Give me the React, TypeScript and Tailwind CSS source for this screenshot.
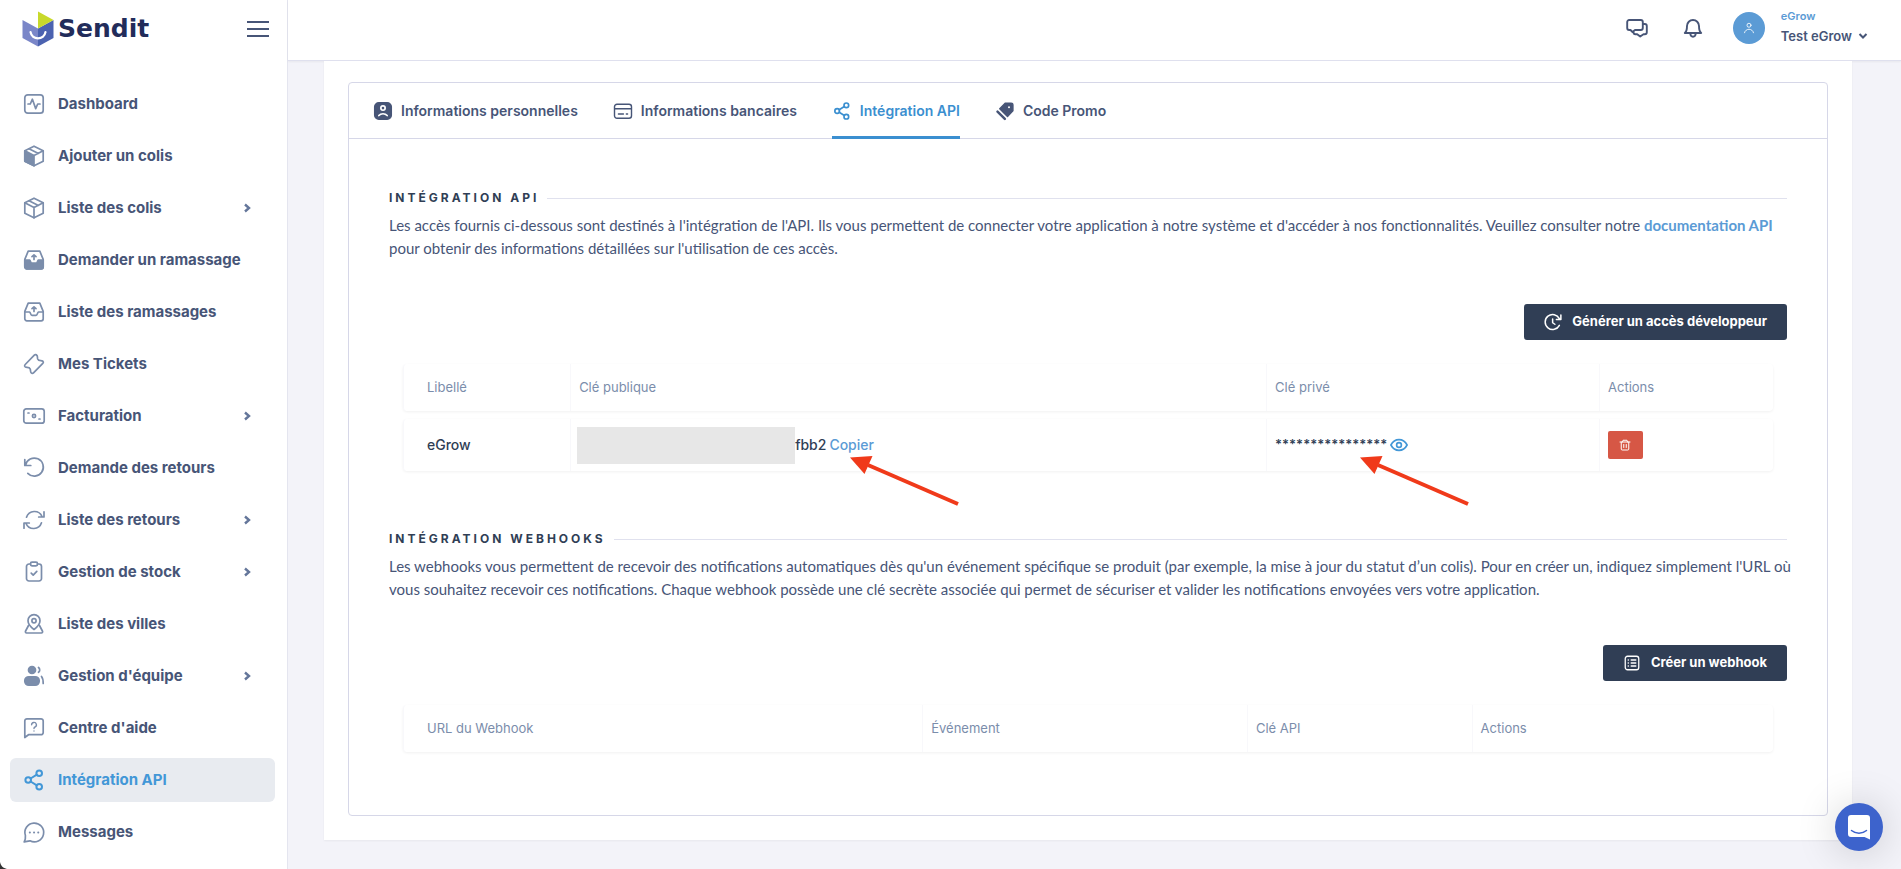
import type { ReactNode } from 'react';

type IconProps = { children: ReactNode; className?: string };

function Icon({ children, className = 'size-6' }: IconProps) {
  return (
    <svg
      viewBox="0 0 24 24"
      fill="none"
      stroke="currentColor"
      strokeWidth="1.7"
      strokeLinecap="round"
      strokeLinejoin="round"
      aria-hidden="true"
      className={`${className} shrink-0`}
    >
      {children}
    </svg>
  );
}

const shareShape = (
  <>
    <circle cx="17.2" cy="5.2" r="2.8" />
    <circle cx="6.2" cy="12" r="2.8" />
    <circle cx="17.2" cy="18.8" r="2.8" />
    <path d="M8.6 10.5l6.2-3.8M8.6 13.5l6.2 3.8" />
  </>
);

const trayShape = 'M6.2 3.2h11.6l3.4 8.2v7.4a2 2 0 0 1-2 2H4.8a2 2 0 0 1-2-2v-7.4z';

const navItems: { label: string; icon: ReactNode; more?: boolean; active?: boolean }[] = [
  {
    label: 'Dashboard',
    icon: (
      <>
        <rect x="2.8" y="2.8" width="18.4" height="18.4" rx="3" />
        <path d="M6 12h2.3l2.1-4.8 3.3 9.4 2-4.6H18" />
      </>
    ),
  },
  {
    label: 'Ajouter un colis',
    icon: (
      <>
        <path d="M12 2.2l9.2 4.6v10.4L12 21.8l-9.2-4.6V6.8z" />
        <path d="M2.8 6.8L12 11.4v10.4l-9.2-4.6z" fill="currentColor" />
        <path d="M12 11.4l9.2-4.6M7 4.8l9.4 4.6" />
      </>
    ),
  },
  {
    label: 'Liste des colis',
    more: true,
    icon: (
      <>
        <path d="M12 2.2l9.2 4.6v10.4L12 21.8l-9.2-4.6V6.8z" />
        <path d="M2.8 6.8L12 11.4l9.2-4.6M12 11.4v10.4M7 4.8l9.4 4.6" />
      </>
    ),
  },
  {
    label: 'Demander un ramassage',
    icon: (
      <>
        <path d={trayShape} />
        <path d="M2.8 12h5l1.4 3h5.6l1.4-3h5v6.8a2 2 0 0 1-2 2H4.8a2 2 0 0 1-2-2z" fill="currentColor" />
        <path d="M12 11.5V7M10 8.6L12 6.8l2 1.8" />
      </>
    ),
  },
  {
    label: 'Liste des ramassages',
    icon: (
      <>
        <path d={trayShape} />
        <path d="M3 12h4.6c.8 0 .9 3.4 2.4 3.4h4c1.5 0 1.6-3.4 2.4-3.4H21M12 11.5V7M10 8.6L12 6.8l2 1.8" />
      </>
    ),
  },
  {
    label: 'Mes Tickets',
    icon: (
      <path d="M12.3 3.2c.8-.8 2-.6 2.6.2.8 1 .4 2.2.8 3.6.5 1.4 1.6 1.7 3.2 1.7 1.2 0 2.2.2 2.4 1 .2.7 0 1.2-.5 1.7l-9.3 9.4c-.8.8-2 .6-2.5-.2-.7-1-.3-2.2-.8-3.6-.5-1.4-1.6-1.7-3.2-1.7-1.2 0-2-.2-2.3-1-.2-.7 0-1.3.5-1.8z" />
    ),
  },
  {
    label: 'Facturation',
    more: true,
    icon: (
      <>
        <rect x="1.8" y="4.8" width="20.4" height="14.4" rx="2.5" />
        <circle cx="12" cy="12" r="1.6" />
        <path d="M6 9h1M17 15h1" />
      </>
    ),
  },
  {
    label: 'Demande des retours',
    icon: <path d="M2.8 3.5v6h6M3.5 9.2A9 9 0 1 1 5.8 17.3" />,
  },
  {
    label: 'Liste des retours',
    more: true,
    icon: <path d="M4.5 9.2A8.3 8.3 0 0 1 20 8.5M22 3.8V9h-5.3M19.5 14.8A8.3 8.3 0 0 1 4 15.5M2 20.2V15h5.3" />,
  },
  {
    label: 'Gestion de stock',
    more: true,
    icon: (
      <>
        <path d="M8.5 4H7a2.5 2.5 0 0 0-2.5 2.5v12A2.5 2.5 0 0 0 7 21h10a2.5 2.5 0 0 0 2.5-2.5v-12A2.5 2.5 0 0 0 17 4h-1.5" />
        <rect x="8.5" y="2.2" width="7" height="3.6" rx="1.5" />
        <path d="M9.2 13.2l2 2 3.6-3.8" />
      </>
    ),
  },
  {
    label: 'Liste des villes',
    icon: (
      <>
        <path d="M12 17.5c-2.6-2-6-5.2-6-8.8a6 6 0 0 1 12 0c0 3.6-3.4 6.8-6 8.8z" />
        <circle cx="12" cy="8.8" r="2.1" />
        <path d="M6.5 13.5L3.6 19c-.5 1 0 2 1 2h14.8c1 0 1.5-1 1-2l-2.9-5.5" />
      </>
    ),
  },
  {
    label: "Gestion d'équipe",
    more: true,
    icon: (
      <>
        <circle cx="10" cy="6" r="3.5" fill="currentColor" />
        <rect x="2.8" y="12.8" width="14.4" height="8.4" rx="4" fill="currentColor" />
        <path d="M16.5 3.5a3 3 0 0 1 0 4.8M19.5 12.5c1.5 1.8 1.7 4 1.7 7" />
      </>
    ),
  },
  {
    label: "Centre d'aide",
    icon: (
      <>
        <path d="M2.8 21.5V5A2.2 2.2 0 0 1 5 2.8h14A2.2 2.2 0 0 1 21.2 5v11.5a2.2 2.2 0 0 1-2.2 2.2H6.5z" />
        <path strokeWidth="1.4" d="M9.6 8.8a2.4 2.4 0 1 1 3.4 2.2c-.7.3-1 .7-1 1.5M12 15v.1" />
      </>
    ),
  },
  { label: 'Intégration API', active: true, icon: <g strokeWidth="2">{shareShape}</g> },
  {
    label: 'Messages',
    icon: (
      <>
        <path d="M2.2 22c1-2 1.5-4 1.2-6.5A9.4 9.4 0 1 1 8 20.8c-1.8.2-3.7.5-5.8 1.2z" />
        <path strokeWidth="2" d="M7.8 12.5h.1M12 12.5h.1M16.2 12.5h.1" />
      </>
    ),
  },
];

const tabs: { label: string; icon: ReactNode; active?: boolean }[] = [
  {
    label: 'Informations personnelles',
    icon: (
      <>
        <rect x="2" y="2" width="20" height="20" rx="5" fill="currentColor" />
        <circle cx="12" cy="8.5" r="2.6" stroke="white" strokeWidth="2" />
        <path d="M7 17.5c2.5-3 7.5-3 10 0" stroke="white" strokeWidth="2" />
      </>
    ),
  },
  {
    label: 'Informations bancaires',
    icon: (
      <>
        <rect x="1.8" y="3.8" width="20.4" height="16.8" rx="3" />
        <path d="M2 9.2h20M6.5 15.5h6M16 15.5h1.5" />
      </>
    ),
  },
  { label: 'Intégration API', active: true, icon: <g strokeWidth="2">{shareShape}</g> },
  {
    label: 'Code Promo',
    icon: (
      <>
        <path d="M12.5 2.5h7a2 2 0 0 1 2 2v7.2L15 18.5 5.7 9.2z" fill="currentColor" />
        <path d="M3 12.8l8.8 8.6" strokeWidth="3" />
        <circle cx="16.8" cy="7.6" r="1.2" fill="white" stroke="none" />
      </>
    ),
  },
];

function Logo() {
  return (
    <a href="#" className="flex items-center gap-1">
      <svg viewBox="0 0 32 36" className="h-9 w-8" aria-hidden="true">
        <path d="M0.5 9L16 17.5V35.5L0.5 27z" fill="#7a86c8" />
        <path d="M31.5 9L16 17.5V35.5L31.5 27z" fill="#4b62b0" />
        <path d="M16 0.5L31.5 9 16 17.5z" fill="#c8d92b" />
        <path d="M8.5 21c1.5 8.5 13.5 8.5 15 0" fill="none" stroke="white" strokeWidth="2.2" strokeLinecap="round" />
      </svg>
      <span className="font-['DejaVu_Sans',sans-serif] text-[25px] leading-6 font-bold text-[#222c5a]">Sendit</span>
    </a>
  );
}

function Sidebar() {
  return (
    <aside className="w-72 shrink-0 border-r border-[#e4e5ef] bg-white">
      <div className="flex h-[57px] items-center justify-between pr-[18px] pl-[22px]">
        <Logo />
        <button type="button" aria-label="Menu" className="flex w-[22px] flex-col gap-[5px] text-[#475577]">
          <span className="h-[2px] w-full bg-current" />
          <span className="h-[2px] w-full bg-current" />
          <span className="h-[2px] w-full bg-current" />
        </button>
      </div>
      <nav className="mt-[25px] flex flex-col gap-2 pr-3 pl-[10px]">
        {navItems.map((item) => (
          <a
            key={item.label}
            href="#"
            className={`flex h-11 items-center gap-3 rounded-md pr-6 pl-3 text-[15px] font-bold ${
              item.active ? 'bg-[#e8ebf0] text-[#4297d7]' : 'text-[#475577]'
            }`}
          >
            <Icon className={item.active ? 'size-6' : 'size-6 text-[#7b8dab]'}>{item.icon}</Icon>
            <span className="flex-1 whitespace-nowrap">{item.label}</span>
            {item.more && (
              <svg viewBox="0 0 8 10" className="h-[10px] w-2 text-[#64769a]" fill="none" stroke="currentColor" strokeWidth="2.4" aria-hidden="true">
                <path d="M2 1.5L6 5 2 8.5" />
              </svg>
            )}
          </a>
        ))}
      </nav>
    </aside>
  );
}

function Header() {
  return (
    <header className="flex h-[61px] items-center justify-end border-b border-[#dfe0ee] bg-white pr-[33px] pb-1 text-[#475577] shadow-xs">
      <button type="button" aria-label="Discussions">
        <Icon>
          <g strokeWidth="1.9">
            <path d="M4.2 4h11.6a2 2 0 0 1 2 2v6a2 2 0 0 1-2 2H10l-2.5 2-2-2H4.2a2 2 0 0 1-2-2V6a2 2 0 0 1 2-2z" />
            <path d="M18 8h1.8a2 2 0 0 1 2 2v6.2a2 2 0 0 1-2 2h-1.3l-3.3 2.3-3-2.3h-1.7a2 2 0 0 1-2-2" />
          </g>
        </Icon>
      </button>
      <button type="button" aria-label="Notifications" className="ml-8">
        <Icon>
          <g strokeWidth="1.9">
            <path d="M3.8 17C5.600 15.5 6 13 6 10a6 6 0 0 1 12 0c0 3 .4 5.5 2.2 7z" />
            <path d="M9.3 17.5c.2 4.3 5.2 4.3 5.4 0" />
          </g>
        </Icon>
      </button>
      <button type="button" className="ml-7 flex items-center gap-4 text-left">
        <span className="flex size-8 items-center justify-center rounded-full bg-[#5b9bd5] text-white">
          <Icon className="size-3">
            <circle cx="12" cy="6.5" r="4" />
            <path d="M3 21.5c2-9.5 16-9.5 18 0" />
          </Icon>
        </span>
        <span className="flex flex-col">
          <span className="text-[11px] leading-4 font-semibold text-[#5b9bd5]">eGrow</span>
          <span className="flex items-center gap-[6px] text-[13px] leading-6 font-semibold">
            Test eGrow
            <svg viewBox="0 0 10 8" className="h-2 w-[10px]" fill="none" stroke="currentColor" strokeWidth="2" aria-hidden="true">
              <path d="M1.5 2L5 5.5 8.5 2" />
            </svg>
          </span>
        </span>
      </button>
    </header>
  );
}

function SectionTitle({ children }: { children: ReactNode }) {
  return (
    <div className="flex items-center gap-2">
      <h2 className="text-xs leading-5 font-bold tracking-[3px] text-[#303e55] uppercase">{children}</h2>
      <span className="h-px flex-1 bg-[#e0e1ee]" />
    </div>
  );
}

const paragraph = "mt-[6px] -mr-4 font-['Lato',sans-serif] text-[15px] leading-[23px] text-[#475577]";
const darkButton = 'flex h-9 items-center gap-[10px] rounded-[3px] bg-[#303e55] px-5 text-[13px] font-bold text-white';
const table = 'w-full table-fixed border-separate border-spacing-y-2 text-left';
const th = 'h-[47px] border-l border-[#f8f8fb] px-2 text-[13px] font-normal text-[#7b8dab] first:rounded-l first:pl-[23px] last:rounded-r';
const td = 'h-[52px] border-l border-[#f8f8fb] px-2 first:rounded-l first:pl-[23px] last:rounded-r';
const row = 'rounded shadow-[0_1px_3px_rgba(0,0,0,0.06)]';

// red callout laid over the keys row
function Arrow({ className }: { className: string }) {
  return (
    <svg
      viewBox="0 0 110 50"
      className={`pointer-events-none absolute top-1/2 z-10 mt-[11px] h-[50px] w-[110px] ${className}`}
      aria-hidden="true"
    >
      <path d="M18 9L108 48" stroke="#f03a1a" strokeWidth="4" />
      <path d="M0 1.5L22.5 0 14.5 18z" fill="#f03a1a" />
    </svg>
  );
}

function KeysTable() {
  return (
    <table className={table}>
      <colgroup>
        <col className="w-[12.2%]" />
        <col className="w-[50.8%]" />
        <col className="w-[24.3%]" />
        <col />
      </colgroup>
      <thead>
        <tr className={row}>
          <th className={th}>Libellé</th>
          <th className={th}>Clé publique</th>
          <th className={th}>Clé privé</th>
          <th className={th}>Actions</th>
        </tr>
      </thead>
      <tbody className="text-sm font-medium text-[#303e55]">
        <tr className={row}>
          <td className={td}>eGrow</td>
          <td className={td}>
            <div className="relative -ml-[2px] flex items-center">
              <span className="h-[37px] w-[218px] bg-[#e7e7e7]" />
              <span>fbb2</span>
              <button type="button" className="ml-[3px] text-[#5b9bd5]">Copier</button>
              <Arrow className="left-[273px]" />
            </div>
          </td>
          <td className={td}>
            <div className="relative flex items-center">
              <span className="h-5 text-[13px] font-semibold">****************</span>
              <button type="button" aria-label="Afficher la clé" className="ml-[3px] text-[#4297d7]">
                <Icon className="size-[18px]">
                  <g strokeWidth="2.2">
                    <path d="M1.2 12c5-9.5 16.6-9.5 21.6 0-5 9.5-16.6 9.5-21.6 0z" />
                    <circle cx="12" cy="12" r="3.2" />
                  </g>
                </Icon>
              </button>
              <Arrow className="left-[85px]" />
            </div>
          </td>
          <td className={td}>
            <button type="button" aria-label="Supprimer" className="flex h-7 w-[35px] items-center justify-center rounded-[2px] bg-[#d65745] text-white">
              <Icon className="size-3">
                <g strokeWidth="2">
                  <path d="M2 6h20M7 6l1-3.5h8L17 6M4.5 6v14a2 2 0 0 0 2 2h11a2 2 0 0 0 2-2V6M9.500 11v6M14.500 11v6" />
                </g>
              </Icon>
            </button>
          </td>
        </tr>
      </tbody>
    </table>
  );
}

function WebhooksTable() {
  return (
    <table className={table}>
      <colgroup>
        <col className="w-[37.9%]" />
        <col className="w-[23.7%]" />
        <col className="w-[16.4%]" />
        <col />
      </colgroup>
      <thead>
        <tr className={row}>
          <th className={th}>URL du Webhook</th>
          <th className={th}>Événement</th>
          <th className={th}>Clé API</th>
          <th className={th}>Actions</th>
        </tr>
      </thead>
    </table>
  );
}

export default function App() {
  return (
    <div className="relative flex min-h-screen bg-[#f3f3f9] font-['Inter',sans-serif]">
      <Sidebar />
      <div className="flex min-w-0 flex-1 flex-col">
        <Header />
        <main className="flex-1 pr-[49px] pb-[30px] pl-9">
          <div className="bg-white px-6 pt-[21px] pb-6 shadow-xs">
            <div className="rounded border border-[#d6d7e8]">
              <div role="tablist" className="flex h-14 gap-[35px] border-b border-[#d6d7e8] px-6">
                {tabs.map((tab) => (
                  <button
                    key={tab.label}
                    type="button"
                    role="tab"
                    aria-selected={!!tab.active}
                    className={`-mb-px flex items-center gap-2 border-b-3 pt-[2px] text-sm font-semibold whitespace-nowrap ${
                      tab.active ? 'border-[#3b8fd0] text-[#3b8fd0]' : 'border-transparent text-[#475577]'
                    }`}
                  >
                    <Icon className="size-5">{tab.icon}</Icon>
                    {tab.label}
                  </button>
                ))}
              </div>
              <div className="px-10 pt-[49px] pb-[55px]">
                <section>
                  <SectionTitle>Intégration API</SectionTitle>
                  <p className={paragraph}>
                    Les accès fournis ci-dessous sont destinés à l'intégration de l'API. Ils vous permettent de connecter votre
                    application à notre système et d'accéder à nos fonctionnalités. Veuillez consulter notre{' '}
                    <a href="#" className="font-bold text-[#5b9bd5]">documentation API</a> pour obtenir des informations
                    détaillées sur l'utilisation de ces accès.
                  </p>
                  <div className="mt-11 flex justify-end">
                    <button type="button" className={darkButton}>
                      <Icon className="size-[18px]">
                        <path strokeWidth="2" d="M20.5 16.5A10 10 0 1 1 20.5 7.5M22.5 2.5v6h-6M11.5 8v5l3 2" />
                      </Icon>
                      Générer un accès développeur
                    </button>
                  </div>
                  <div className="mt-4 px-[14px]">
                    <KeysTable />
                  </div>
                </section>
                <section className="mt-[50px]">
                  <SectionTitle>Intégration Webhooks</SectionTitle>
                  <p className={paragraph}>
                    Les webhooks vous permettent de recevoir des notifications automatiques dès qu'un événement spécifique se
                    produit (par exemple, la mise à jour du statut d’un colis). Pour en créer un, indiquez simplement l'URL où
                    vous souhaitez recevoir ces notifications. Chaque webhook possède une clé secrète associée qui permet de
                    sécuriser et valider les notifications envoyées vers votre application.
                  </p>
                  <div className="mt-11 flex justify-end">
                    <button type="button" className={darkButton}>
                      <Icon className="size-[18px]">
                        <rect x="3" y="3" width="18" height="18" rx="3" />
                        <path strokeWidth="2" d="M11 8h6M11 12h6M11 16h6M7 8h.1M7 12h.1M7 16h.1" />
                      </Icon>
                      Créer un webhook
                    </button>
                  </div>
                  <div className="mt-4 px-[14px]">
                    <WebhooksTable />
                  </div>
                </section>
              </div>
            </div>
          </div>
        </main>
      </div>
      <button
        type="button"
        aria-label="Ouvrir le chat"
        className="fixed right-[18px] bottom-[18px] flex size-12 items-center justify-center rounded-full bg-[#3d63cc] shadow-[0_2px_40px_rgba(0,0,0,0.18)]"
      >
        <svg viewBox="0 0 22 25" className="h-[25px] w-[22px]" aria-hidden="true">
          <path d="M3 0h16a3 3 0 0 1 3 3v21.5L16.5 22H3a3 3 0 0 1-3-3V3a3 3 0 0 1 3-3z" fill="white" />
          <path d="M3.5 15.5c4 3.5 11 3.5 15 0" fill="none" stroke="#3d63cc" strokeWidth="1.5" strokeLinecap="round" />
        </svg>
      </button>
      <svg viewBox="0 0 7 7" className="fixed bottom-0 left-0 size-[7px]" aria-hidden="true">
        <path d="M0 0c1 4 3 6 7 7H0z" fill="#333" />
      </svg>
    </div>
  );
}
